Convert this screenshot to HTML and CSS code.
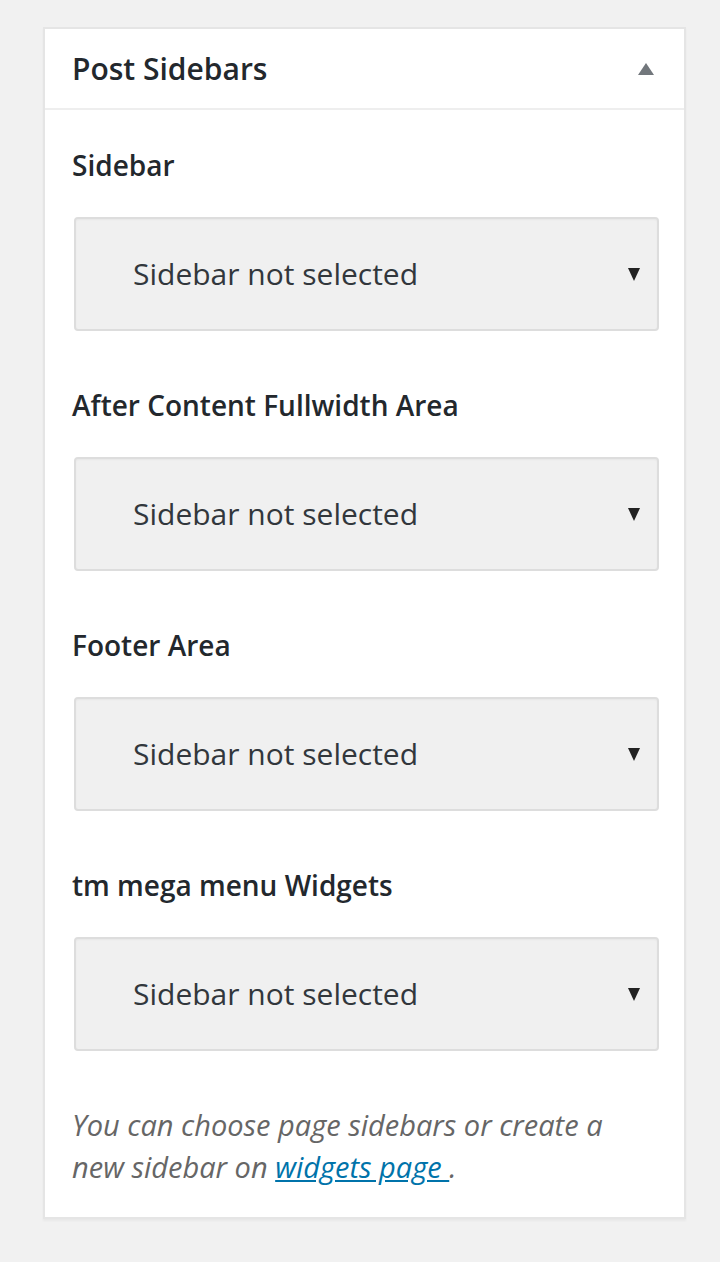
FILE: index.html
```html
<!DOCTYPE html>
<html lang="en">
<head>
<meta charset="utf-8">
<title>Post Sidebars</title>
<link rel="stylesheet" href="styles.css">
</head>
<body>
<div class="panel">
  <div class="head">
    <h2 class="title">Post Sidebars</h2>
    <svg class="toggle" width="16" height="12" viewBox="0 0 16 12"><polygon points="8,0 16,12 0,12" fill="#72777c"/></svg>
  </div>
  <div class="body">
    <div class="group">
      <div class="label">Sidebar</div>
      <div class="select"><span class="value">Sidebar not selected</span><svg class="arrow" width="12" height="13" viewBox="0 0 12 13"><polygon points="0,0 12,0 6,13" fill="#222"/></svg></div>
    </div>
    <div class="group">
      <div class="label">After Content Fullwidth Area</div>
      <div class="select"><span class="value">Sidebar not selected</span><svg class="arrow" width="12" height="13" viewBox="0 0 12 13"><polygon points="0,0 12,0 6,13" fill="#222"/></svg></div>
    </div>
    <div class="group">
      <div class="label">Footer Area</div>
      <div class="select"><span class="value">Sidebar not selected</span><svg class="arrow" width="12" height="13" viewBox="0 0 12 13"><polygon points="0,0 12,0 6,13" fill="#222"/></svg></div>
    </div>
    <div class="group">
      <div class="label">tm mega menu Widgets</div>
      <div class="select"><span class="value">Sidebar not selected</span><svg class="arrow" width="12" height="13" viewBox="0 0 12 13"><polygon points="0,0 12,0 6,13" fill="#222"/></svg></div>
    </div>
    <p class="note">You can choose page sidebars or create a new sidebar on <a href="#">widgets page </a>.</p>
  </div>
</div>
</body>
</html>
```
FILE: styles.css
```css
html, body {
  margin: 0;
  padding: 0;
}
body {
  background: #f1f1f1;
  font-family: "Open Sans", "Noto Sans", sans-serif;
  color: #23282d;
  width: 720px;
  height: 1262px;
}
.panel {
  margin: 27px 0 0 43px;
  width: 643px;
  box-sizing: border-box;
  background: #fff;
  border: 2px solid #e5e5e5;
  box-shadow: 0 2px 2px rgba(0,0,0,0.04);
}
.head {
  height: 79px;
  border-bottom: 2px solid #eee;
  display: flex;
  align-items: center;
  justify-content: space-between;
  padding: 0 30px 0 27px;
}
.title {
  margin: 0;
  font-size: 30px;
  font-weight: 600;
  color: #23282d;
  line-height: 36px;
}
.toggle {
  display: block;
}
.body {
  padding: 0 25px 29px 27px;
  display: flex;
  flex-direction: column;
}
.group {
  display: flex;
  flex-direction: column;
  padding-top: 37px;
}
.group + .group {
  padding-top: 56px;
}
.label {
  font-size: 28px;
  font-weight: 600;
  line-height: 36px;
  color: #23282d;
}
.select {
  margin: 34px 0 0 2px;
  height: 114px;
  box-sizing: border-box;
  background: #f0f0f0;
  border: 2px solid #ddd;
  border-radius: 4px;
  display: flex;
  align-items: center;
  justify-content: space-between;
  padding: 0 17px 0 57px;
  box-shadow: inset 0 1px 2px rgba(0,0,0,0.04);
}
.value {
  font-size: 30px;
  line-height: 40px;
  color: #32373c;
}
.arrow {
  display: block;
}
.note {
  margin: 53px 0 0 0;
  max-width: 570px;
  font-size: 29px;
  font-style: italic;
  line-height: 42px;
  color: #666;
}
.note a {
  color: #0073aa;
  text-decoration: underline;
}
```
